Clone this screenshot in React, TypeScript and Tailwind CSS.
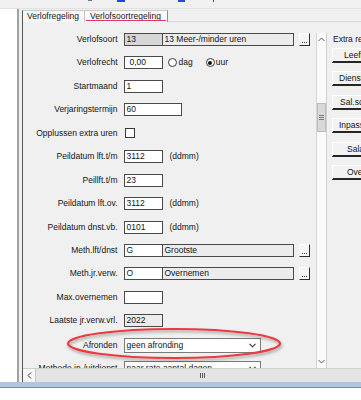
import React from "react";

function Field({ className, children }: { className: string; children?: React.ReactNode }) {
  return (
    <div className={`h-[13px] shrink-0 border border-[#4a4a4a] leading-[11px] whitespace-nowrap overflow-hidden ${className}`}>
      {children}
    </div>
  );
}

function Dots() {
  return (
    <div className="ml-[5px] w-[11px] h-[13px] shrink-0 bg-[#f5f5f5] border-t border-l border-t-white border-l-white border-r border-b border-r-[#2e2e2e] border-b-[#2e2e2e] flex items-end justify-center pb-[2px]">
      <div className="flex gap-[1px]">
        <div className="w-[1px] h-[1px] bg-[#4a2a7a]" />
        <div className="w-[1px] h-[1px] bg-[#4a2a7a]" />
        <div className="w-[1px] h-[1px] bg-[#4a2a7a]" />
      </div>
    </div>
  );
}

function Row({ label, tall, children }: { label: string; tall?: boolean; children?: React.ReactNode }) {
  return (
    <div className="flex h-[23.45px] shrink-0">
      <div
        className={`w-[94.5px] shrink-0 text-right whitespace-nowrap ${tall ? "h-[15px] leading-[15px]" : "h-[13px] leading-[13px]"}`}
      >
        {label}
      </div>
      <div className={`ml-[6px] flex items-center ${tall ? "h-[15px]" : "h-[13px]"}`}>{children}</div>
    </div>
  );
}

function Radio({ checked }: { checked?: boolean }) {
  return (
    <div className="w-[9px] h-[9px] rounded-full border border-[#3a3a3a] bg-white flex items-center justify-center shrink-0">
      {checked ? <div className="w-[4px] h-[4px] rounded-full bg-[#111]" /> : null}
    </div>
  );
}

function Select({ text }: { text: string }) {
  return (
    <div className="w-[137px] h-[15px] shrink-0 bg-white border border-[#7a7a7a] flex items-center justify-between pl-[2px] pr-[4px] whitespace-nowrap">
      <span className="leading-[13px]">{text}</span>
      <svg width="7" height="5" viewBox="0 0 7 5">
        <polyline points="0.5,0.8 3.5,3.8 6.5,0.8" fill="none" stroke="#333" strokeWidth="1.1" />
      </svg>
    </div>
  );
}

function SideButton({ label, pad }: { label: string; pad: string }) {
  return (
    <div
      className={`w-[70px] h-[15px] shrink-0 bg-[#f2f2f2] border-t border-l border-t-white border-l-white border-b-2 border-b-[#262626] leading-[13px] whitespace-nowrap ${pad}`}
    >
      {label}
    </div>
  );
}

export default function App() {
  return (
    <div className="relative w-[361px] h-[400px] overflow-hidden bg-white text-[8.5px] text-[#151515] font-['Liberation_Sans',Arial,sans-serif]">
      {/* top strip */}
      <div className="relative h-[9px] bg-[#f0f0f0] border-b border-[#e2e2e2]">
        <div className="absolute top-0 left-[117px] w-[8px] h-[2px] bg-[#2447e0]" />
        <div className="absolute top-0 left-[178px] w-[7px] h-[2px] bg-[#2447e0]" />
        <div className="absolute top-0 left-[213px] w-[1px] h-[2px] bg-[#2447e0]" />
        <div className="absolute top-0 left-[88px] w-[4px] h-[1px] bg-[#777]" />
      </div>

      {/* middle */}
      <div className="flex h-[373px]">
        <div className="w-[17px] shrink-0 bg-white" />
        <div className="w-[2px] shrink-0 bg-[#a2a2a2]" />
        <div className="flex-1 flex flex-col bg-[#f0f0f0] pl-[3px] min-w-0">
          {/* tabs */}
          <div className="flex h-[13px] pt-[1px] shrink-0 border-b border-[#d9d9d9]">
            <div className="w-[63px] h-[12px] bg-[#f8f8f8] border-l-[1.5px] border-[#555] border-t border-t-[#c9c9c9] border-r border-r-[#c4c4c4] pl-[4px] leading-[11px] whitespace-nowrap">
              Verlofregeling
            </div>
            <div className="relative w-[83px] h-[12px] bg-[#fbfbfb] border-t border-t-[#c9c9c9] border-r border-r-[#8f8f8f] pl-[5px] leading-[11px] whitespace-nowrap">
              Verlofsoortregeling
              <div className="absolute left-[1px] right-[1px] bottom-[1px] h-[1px] bg-[#e0306a]" />
            </div>
          </div>

          {/* content */}
          <div className="flex-1 flex flex-col border-l-[1.5px] border-[#555] min-h-0">
            <div className="flex flex-1 min-h-0">
              {/* form */}
              <div className="flex-1 min-w-0 overflow-hidden pt-[11px] flex flex-col">
                <Row label="Verlofsoort">
                  <Field className="w-[39px] bg-[#d6d6d6] pl-[2px]">13</Field>
                  <Field className="w-[131px] bg-[#ececec] pl-[2px] border-l-0">13 Meer-/minder uren</Field>
                  <Dots />
                </Row>
                <Row label="Verlofrecht">
                  <Field className="w-[39px] bg-white pl-[5px]">0,00</Field>
                  <div className="ml-[5px]">
                    <Radio />
                  </div>
                  <span className="ml-[2px] leading-[13px]">dag</span>
                  <div className="ml-[13px]">
                    <Radio checked />
                  </div>
                  <span className="ml-[1px] leading-[13px]">uur</span>
                </Row>
                <Row label="Startmaand">
                  <Field className="w-[39px] bg-white pl-[2px]">1</Field>
                </Row>
                <Row label="Verjaringstermijn">
                  <Field className="w-[58px] bg-white pl-[2px]">60</Field>
                </Row>
                <Row label="Opplussen extra uren">
                  <div className="ml-[1px] w-[10px] h-[10px] bg-white border border-[#3a3a3a]" />
                </Row>
                <Row label="Peildatum lft.t/m">
                  <Field className="w-[39px] bg-white pl-[2px]">3112</Field>
                  <span className="ml-[7px] leading-[13px]">(ddmm)</span>
                </Row>
                <Row label="Peillft.t/m">
                  <Field className="w-[39px] bg-white pl-[2px]">23</Field>
                </Row>
                <Row label="Peildatum lft.ov.">
                  <Field className="w-[39px] bg-white pl-[2px]">3112</Field>
                  <span className="ml-[7px] leading-[13px]">(ddmm)</span>
                </Row>
                <Row label="Peildatum dnst.vb.">
                  <Field className="w-[39px] bg-white pl-[2px]">0101</Field>
                  <span className="ml-[7px] leading-[13px]">(ddmm)</span>
                </Row>
                <Row label="Meth.lft/dnst">
                  <Field className="w-[39px] bg-white pl-[2px]">G</Field>
                  <Field className="w-[131px] bg-[#ececec] pl-[2px] border-l-0">Grootste</Field>
                  <Dots />
                </Row>
                <Row label="Meth.jr.verw.">
                  <Field className="w-[39px] bg-white pl-[2px]">O</Field>
                  <Field className="w-[131px] bg-[#ececec] pl-[2px] border-l-0">Overnemen</Field>
                  <Dots />
                </Row>
                <Row label="Max.overnemen">
                  <Field className="w-[39px] bg-white pl-[2px]" />
                </Row>
                <Row label="Laatste jr.verw.vrl.">
                  <Field className="w-[39px] bg-[#ececec] pl-[2px]">2022</Field>
                </Row>
                <Row label="Afronden" tall>
                  <Select text="geen afronding" />
                </Row>
                <Row label="Methode in-/uitdienst" tall>
                  <Select text="naar rato aantal dagen" />
                </Row>
              </div>

              {/* vertical scrollbar */}
              <div className="mt-[11px] w-[11px] shrink-0 bg-[#fafafa] border-l border-[#d6d6d6] border-r border-r-[#cfcfcf] flex flex-col">
                <div className="h-[12px] flex items-center justify-center">
                  <svg width="7" height="5" viewBox="0 0 7 5">
                    <polyline points="0.5,4 3.5,1 6.5,4" fill="none" stroke="#606060" strokeWidth="1" />
                  </svg>
                </div>
                <div className="mt-[58px] h-[29px] bg-[#d9d9d9] border border-[#bcbcbc] flex flex-col items-center justify-center gap-[1px]">
                  <div className="w-[5px] h-[1px] bg-[#7a7a7a]" />
                  <div className="w-[5px] h-[1px] bg-[#7a7a7a]" />
                  <div className="w-[5px] h-[1px] bg-[#7a7a7a]" />
                </div>
                <div className="flex-1" />
                <div className="h-[10px] flex items-start justify-center pt-[1px]">
                  <svg width="7" height="5" viewBox="0 0 7 5">
                    <polyline points="0.5,1 3.5,4 6.5,1" fill="none" stroke="#606060" strokeWidth="1" />
                  </svg>
                </div>
              </div>

              {/* right panel */}
              <div className="w-[34px] shrink-0 overflow-hidden pl-[5px] pt-[11px] flex flex-col">
                <div className="h-[13px] leading-[13px] pl-[1px] whitespace-nowrap">Extra regelingen</div>
                <div className="mt-[2px] flex flex-col gap-[8.4px]">
                  <SideButton label="Leeftijd" pad="pl-[11px]" />
                  <SideButton label="Dienstjaren" pad="pl-[6px]" />
                  <SideButton label="Sal.schaal" pad="pl-[7px]" />
                  <SideButton label="Inpassing" pad="pl-[6px]" />
                  <SideButton label="Salaris" pad="pl-[14px]" />
                  <SideButton label="Overige" pad="pl-[14px]" />
                </div>
              </div>
            </div>

            {/* horizontal scrollbar */}
            <div className="h-[14px] shrink-0 flex bg-[#e8e8e8] border-t border-[#cfcfcf]">
              <div className="w-[12px] bg-[#f7f7f7] flex items-center justify-center">
                <svg width="5" height="7" viewBox="0 0 5 7">
                  <polyline points="4,0.5 1,3.5 4,6.5" fill="none" stroke="#404040" strokeWidth="1" />
                </svg>
              </div>
              <div className="flex-1 bg-[#e4e4e4] border-l border-[#c8c8c8] flex items-center pl-[164px] gap-[1px]">
                <div className="w-[1px] h-[5px] bg-[#5a5a5a]" />
                <div className="w-[1px] h-[5px] bg-[#5a5a5a]" />
                <div className="w-[1px] h-[5px] bg-[#5a5a5a]" />
              </div>
            </div>
          </div>
        </div>
      </div>

      {/* bottom band */}
      <div className="h-[6px] bg-[#b0c6e0] border-b border-[#7d8b99]" />

      {/* red annotation ellipse */}
      <svg className="absolute left-0 top-0 pointer-events-none" width="361" height="400" viewBox="0 0 361 400">
        <defs>
          <filter id="sh" x="-10%" y="-50%" width="120%" height="200%">
            <feDropShadow dx="1" dy="2" stdDeviation="1.4" floodColor="#000" floodOpacity="0.35" />
          </filter>
        </defs>
        <ellipse cx="174" cy="343.5" rx="106" ry="14.5" fill="none" stroke="#ea3a40" strokeWidth="2.2" filter="url(#sh)" />
      </svg>
    </div>
  );
}
